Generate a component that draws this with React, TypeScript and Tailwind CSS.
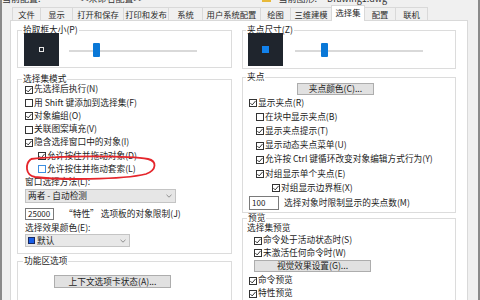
import React from "react";

function Box({ checked, hover }: { checked?: boolean; hover?: boolean }) {
  return (
    <span
      className={`w-[8px] h-[8px] border ${hover ? "border-[#3d8fe0]" : "border-[#333333]"} bg-white flex items-center justify-center shrink-0`}
    >
      {checked && (
        <svg width="6" height="6" viewBox="0 0 6 6">
          <path d="M0.4 3.1 L2.2 4.9 L5.6 0.9" stroke="#1f1f1f" strokeWidth="0.9" fill="none" />
        </svg>
      )}
    </span>
  );
}

function Check({
  label,
  checked,
  hover,
  h,
  ml,
}: {
  label: React.ReactNode;
  checked?: boolean;
  hover?: boolean;
  h: string;
  ml?: string;
}) {
  return (
    <div className={`flex items-center gap-[1px] whitespace-nowrap ${h} ${ml ?? ""}`}>
      <Box checked={checked} hover={hover} />
      <span>{label}</span>
    </div>
  );
}

function Chevron() {
  return (
    <svg width="6" height="4" viewBox="0 0 6 4">
      <path d="M0.5 0.8 L3 3.2 L5.5 0.8" stroke="#777" strokeWidth="0.8" fill="none" />
    </svg>
  );
}

function Slider({ thumb }: { thumb: string }) {
  return (
    <div className="relative w-[128px] h-[33px]">
      <div className="absolute left-0 right-0 top-[17px] h-[2px] bg-[#d9d9d9]" />
      <div className={`absolute top-[10px] w-[7px] h-[14px] bg-[#0a78d7] rounded-[1px] ${thumb}`} />
    </div>
  );
}

const tabs: [string, number][] = [
  ["文件", 29],
  ["显示", 33],
  ["打开和保存", 52],
  ["打印和发布", 46],
  ["系统", 35],
  ["用户系统配置", 59],
  ["绘图", 31],
  ["三维建模", 42],
  ["选择集", 34],
  ["配置", 32],
  ["联机", 33],
];

export default function App() {
  return (
    <div className="w-[480px] h-[300px] overflow-hidden bg-[#f0f0f0] relative border-l-2 border-r-2 border-[#8a8a8a] font-['Noto_Sans_CJK_SC',sans-serif] text-[8.7px] leading-none text-[#1c1c1c]">
      {/* partially visible title line */}
      <div className="h-[7px] overflow-hidden">
        <div className="-mt-[6px] flex items-center whitespace-nowrap text-[9px] text-[#333]">
          <span className="ml-[0px]">当前配置:</span>
          <span className="ml-[38px]">&lt;&lt;未命名配置&gt;&gt;</span>
          <span className="ml-[118px] w-[9px] h-[7px] bg-[#e8b93a]" />
          <span className="ml-[8px]">当前图形:</span>
          <span className="ml-[10px]">Drawing1.dwg</span>
        </div>
      </div>

      {/* tabs */}
      <div className="flex items-end h-[13px] ml-[11px] relative z-10">
        {tabs.map(([t, w]) => {
          const sel = t === "选择集";
          return (
            <div
              key={t}
              style={{ width: w }}
              className={
                sel
                  ? "h-[16px] -mb-[1px] bg-white border border-b-0 border-[#d9d9d9] -ml-px flex items-center justify-center text-[8.3px] pb-[2px]"
                  : "h-[13px] bg-[#f0f0f0] border border-b-0 border-[#d9d9d9] -ml-px flex items-center justify-center text-[8.3px] text-[#2a2a2a]"
              }
            >
              {t}
            </div>
          );
        })}
      </div>

      {/* panel */}
      <div className="ml-[8px] w-[458px] h-[300px] bg-white border border-[#d9d9d9] flex gap-[10px] pl-[6px] pt-[5px]">
        {/* left column */}
        <div className="w-[215px] flex flex-col">
          <fieldset className="border border-[#dcdcdc]">
            <legend className="ml-[4px] px-[1px] h-[8px] leading-[8px]">拾取框大小(P)</legend>
            <div className="flex items-start pl-[6px] -mt-[1px] pb-[1px]">
              <div className="w-[35px] h-[33px] bg-[#1f252d] flex items-center justify-center">
                <div className="w-[5px] h-[5px] border border-[#e8e8e8]" />
              </div>
              <div className="ml-[10px]">
                <Slider thumb="left-[24px]" />
              </div>
            </div>
          </fieldset>

          <fieldset className="border border-[#dcdcdc] mt-[7px]">
            <legend className="ml-[4px] px-[1px] h-[8px] leading-[8px]">选择集模式</legend>
            <div className="pl-[7px] pb-[6px]">
              <Check h="h-[13.3px]" checked label="先选择后执行(N)" />
              <Check h="h-[13.3px]" label="用 Shift 键添加到选择集(F)" />
              <Check h="h-[13.3px]" checked label="对象编组(O)" />
              <Check h="h-[13.3px]" label="关联图案填充(V)" />
              <Check h="h-[13.3px]" checked label="隐含选择窗口中的对象(I)" />
              <Check h="h-[13.3px]" ml="ml-[13px]" checked label="允许按住并拖动对象(D)" />
              <Check h="h-[13.3px]" ml="ml-[13px]" hover label="允许按住并拖动套索(L)" />
              <div className="h-[13.3px] flex items-center">窗口选择方法(L):</div>
              <div className="w-[151px] h-[14px] bg-[#e6e6e6] border border-[#c4c4c4] flex items-center justify-between px-[2px]">
                <span>两者 - 自动检测</span>
                <span className="mr-[1px]">
                  <Chevron />
                </span>
              </div>
              <div className="flex items-center mt-[5px]">
                <div className="w-[29px] h-[12px] border border-[#7a7a7a] flex items-center pl-[2px] text-[8px]">
                  25000
                </div>
                <span className="ml-[10px]">“特性” 选项板的对象限制(J)</span>
              </div>
              <div className="h-[13px] mt-[1px] flex items-center">选择效果颜色(E):</div>
              <div className="w-[105px] h-[13px] bg-[#e8e8e8] border border-[#c4c4c4] flex items-center justify-between px-[2px]">
                <span className="flex items-center gap-[2px]">
                  <span className="w-[7px] h-[7px] bg-[#1a5fe8] border border-[#1a2a60]" />
                  默认
                </span>
                <span className="mr-[1px]">
                  <Chevron />
                </span>
              </div>
            </div>
          </fieldset>

          <fieldset className="border border-[#dcdcdc] mt-[3px] h-[60px]">
            <legend className="ml-[5px] px-[1px] h-[8px] leading-[8px]">功能区选项</legend>
            <div className="mt-[10px] ml-[36px] w-[117px] h-[13px] bg-[#e1e1e1] border border-[#adadad] flex items-center justify-center">
              上下文选项卡状态(A)...
            </div>
          </fieldset>
        </div>

        {/* right column */}
        <div className="w-[214px] flex flex-col">
          <fieldset className="border border-[#dcdcdc]">
            <legend className="ml-[3px] px-[1px] h-[8px] leading-[8px]">夹点尺寸(Z)</legend>
            <div className="flex items-start pl-[5px] -mt-[1px] pb-[2px]">
              <div className="w-[35px] h-[33px] bg-[#1f252d] flex items-center justify-center">
                <div className="w-[7px] h-[7px] bg-[#1282ec]" />
              </div>
              <div className="ml-[12px]">
                <Slider thumb="left-[26px]" />
              </div>
            </div>
          </fieldset>

          <fieldset className="border border-[#dcdcdc] mt-[4px]">
            <legend className="ml-[3px] px-[1px] h-[8px] leading-[8px]">夹点</legend>
            <div className="pl-[6px] pb-[2px]">
              <div className="ml-[48px] mt-[2px] w-[77px] h-[12px] bg-[#e1e1e1] border border-[#adadad] flex items-center justify-center">
                夹点颜色(C)...
              </div>
              <div className="mt-[1px]">
                <Check h="h-[14.2px]" checked label="显示夹点(R)" />
                <Check h="h-[14.2px]" ml="ml-[7px]" label="在块中显示夹点(B)" />
                <Check h="h-[14.2px]" ml="ml-[7px]" checked label="显示夹点提示(T)" />
                <Check h="h-[14.2px]" ml="ml-[7px]" checked label="显示动态夹点菜单(U)" />
                <Check h="h-[14.2px]" ml="ml-[7px]" checked label="允许按 Ctrl 键循环改变对象编辑方式行为(Y)" />
                <Check h="h-[14.2px]" ml="ml-[7px]" checked label="对组显示单个夹点(E)" />
                <Check h="h-[14.2px]" ml="ml-[23px]" checked label="对组显示边界框(X)" />
              </div>
              <div className="flex items-center mt-[1px]">
                <div className="w-[30px] h-[14px] border border-[#7a7a7a] flex items-center pl-[2px] text-[8px]">
                  100
                </div>
                <span className="ml-[5px]">选择对象时限制显示的夹点数(M)</span>
              </div>
            </div>
          </fieldset>

          <fieldset className="border border-[#dcdcdc] mt-[1px] h-[100px]">
            <legend className="ml-[4px] px-[1px] h-[8px] leading-[8px]">预览</legend>
            <div className="pl-[4px]">
              <div className="h-[12px] flex items-center">选择集预览</div>
              <Check h="h-[12.5px]" ml="ml-[7px]" checked label="命令处于活动状态时(S)" />
              <Check h="h-[12.5px]" ml="ml-[7px]" checked label="未激活任何命令时(W)" />
              <div className="ml-[7px] mt-[1px] w-[117px] h-[12px] bg-[#e1e1e1] border border-[#adadad] flex items-center justify-center">
                视觉效果设置(G)...
              </div>
              <div className="mt-[2px]">
                <Check h="h-[13px]" ml="ml-[2px]" checked label="命令预览" />
                <Check h="h-[13px]" ml="ml-[2px]" checked label="特性预览" />
              </div>
            </div>
          </fieldset>
        </div>
      </div>

      {/* red hand-drawn highlight */}
      <svg className="absolute left-[20px] top-[154px]" width="140" height="28" viewBox="0 0 140 28">
        <path
          d="M9 5 C 35 2, 105 1, 126 5 C 135 7, 135 16, 124 20 C 100 26, 35 26, 13 23 C 3 21, 3 10, 9 5"
          stroke="#e5262c"
          strokeWidth="1.8"
          fill="none"
        />
      </svg>
    </div>
  );
}
